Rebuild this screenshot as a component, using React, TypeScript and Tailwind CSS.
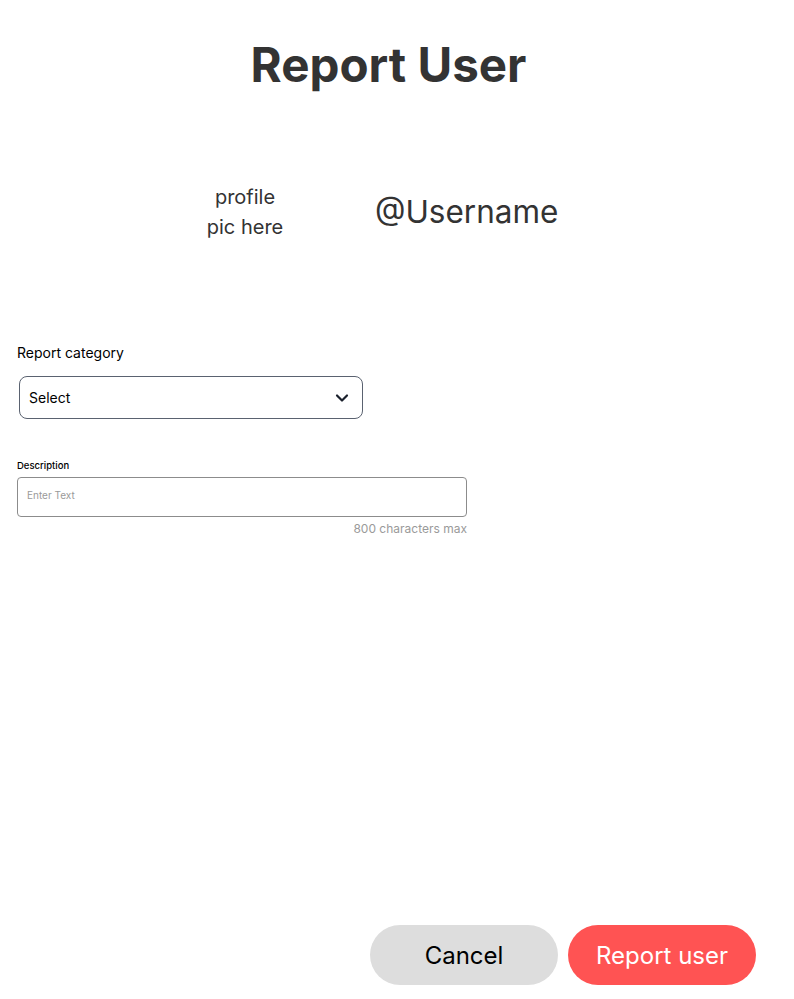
export default function App() {
  return (
    <div className="w-[794px] min-h-[999px] bg-white font-['Inter','Liberation_Sans',sans-serif] text-[#333333]">
      <div className="w-[777px] pt-[36px]">
        <h1 className="text-center text-[47.5px] leading-[58px] font-bold text-[#333333]">Report User</h1>
      </div>

      <div className="mt-[88px] flex h-[60px] items-center">
        <div className="ml-[170px] w-[150px] text-center text-[20px] leading-[30px] text-[#333333]">
          profile
          <br />
          pic here
        </div>
        <div className="ml-[55px] text-[31.5px] leading-[40px] text-[#333333]">@Username</div>
      </div>

      <div className="mt-[101px] pl-[17px]">
        <div className="text-[14px] leading-[20px] text-black">Report category</div>
        <div className="mt-[13px] ml-[2px] flex h-[43px] w-[344px] items-center justify-between rounded-[8px] border border-[#5a6270] pl-[9px] pr-[13px]">
          <span className="text-[14px] text-black">Select</span>
          <svg width="14" height="10" viewBox="0 0 14 10" fill="none">
            <path d="M2 2.5 L7 7.5 L12 2.5" stroke="#1a202c" strokeWidth="2.2" strokeLinecap="round" strokeLinejoin="round" />
          </svg>
        </div>

        <div className="mt-[41px] text-[9.5px] leading-[12px] font-medium text-black">Description</div>
        <div className="mt-[5px] h-[40px] w-[450px] rounded-[4px] border border-[#8c8c8c] pl-[9px] pt-[10px]">
          <span className="block text-[10px] leading-[14px] text-[#9a9a9a]">Enter Text</span>
        </div>
        <div className="mt-[3px] w-[450px] text-right text-[12px] leading-[18px] text-[#9a9a9a]">800 characters max</div>
      </div>

      <div className="mt-[387px] flex justify-end gap-[10px] pr-[38px]">
        <button className="h-[60px] w-[188px] rounded-full bg-[#dddddd] pt-[2px] text-[24px] text-black">Cancel</button>
        <button className="h-[60px] w-[188px] rounded-full bg-[#ff5353] pt-[2px] text-[24px] text-white">Report user</button>
      </div>
    </div>
  );
}
